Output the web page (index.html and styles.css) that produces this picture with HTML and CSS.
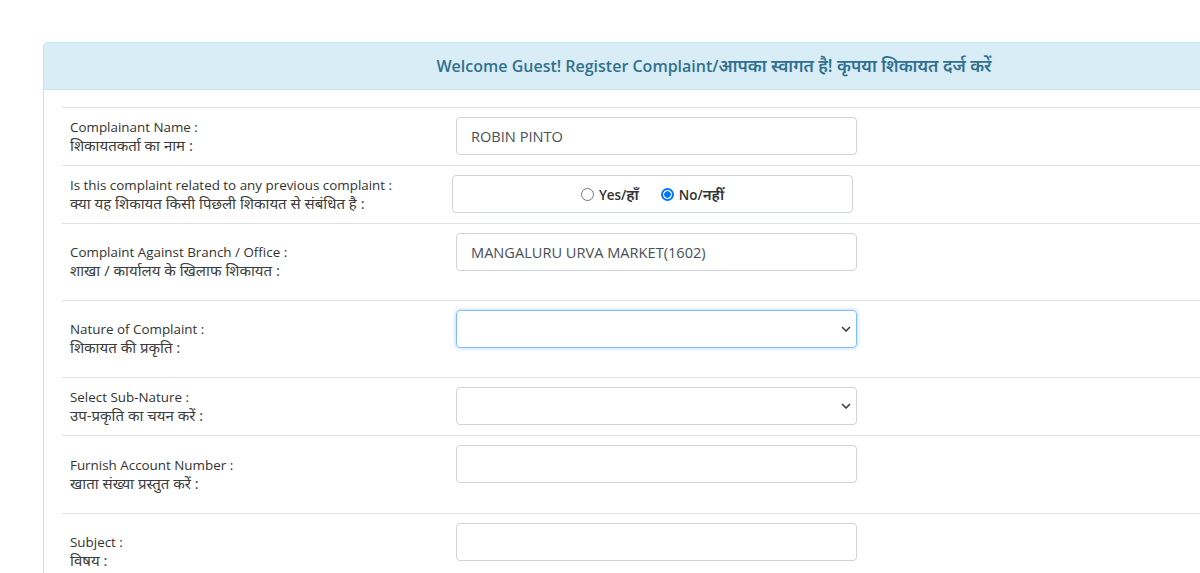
FILE: index.html
```html
<!DOCTYPE html>
<html lang="en">
<head>
<meta charset="utf-8">
<title>Register Complaint</title>
<link rel="stylesheet" href="styles.css">
</head>
<body>
<div class="panel">
  <div class="panel-heading">Welcome Guest! Register Complaint/<span class="hi">आपका स्वागत है! कृपया शिकायत दर्ज करें</span></div>
  <div class="panel-body">
    <table class="form-table">
      <tr>
        <td class="lbl">Complainant Name :<br><span class="hi">शिकायतकर्ता का नाम :</span></td>
        <td class="fld"><div class="input">ROBIN PINTO</div></td>
      </tr>
      <tr>
        <td class="lbl">Is this complaint related to any previous complaint :<br><span class="hi">क्या यह शिकायत किसी पिछली शिकायत से संबंधित है :</span></td>
        <td class="fld"><div class="radio-box">
          <span class="radio"></span><span class="opt">Yes/<span class="hi">हाँ</span></span>
          <span class="radio checked"></span><span class="opt">No/<span class="hi">नहीं</span></span>
        </div></td>
      </tr>
      <tr>
        <td class="lbl">Complaint Against Branch / Office :<br><span class="hi">शाखा / कार्यालय के खिलाफ शिकायत :</span></td>
        <td class="fld"><div class="input">MANGALURU URVA MARKET(1602)</div><div class="msg"></div></td>
      </tr>
      <tr>
        <td class="lbl">Nature of Complaint :<br><span class="hi">शिकायत की प्रकृति :</span></td>
        <td class="fld"><div class="input select focus"><svg class="chev" width="10" height="6" viewBox="0 0 10 6"><path d="M1 1l4 4 4-4" fill="none" stroke="#343a40" stroke-width="1.5"/></svg></div><div class="msg"></div></td>
      </tr>
      <tr>
        <td class="lbl">Select Sub-Nature :<br><span class="hi">उप-प्रकृति का चयन करें :</span></td>
        <td class="fld"><div class="input select"><svg class="chev" width="10" height="6" viewBox="0 0 10 6"><path d="M1 1l4 4 4-4" fill="none" stroke="#343a40" stroke-width="1.5"/></svg></div></td>
      </tr>
      <tr>
        <td class="lbl">Furnish Account Number :<br><span class="hi">खाता संख्या प्रस्तुत करें :</span></td>
        <td class="fld"><div class="input"></div><div class="msg tall"></div></td>
      </tr>
      <tr>
        <td class="lbl">Subject :<br><span class="hi">विषय :</span></td>
        <td class="fld"><div class="input"></div><div class="msg"></div></td>
      </tr>
    </table>
  </div>
</div>
</body>
</html>
```
FILE: styles.css
```css
html { overflow: hidden; }
body {
  margin: 0;
  background: #fff;
  font-family: "Open Sans", "Noto Sans", sans-serif;
  font-size: 13.4px;
  color: #333;
}
.hi { font-size: 1.12em; font-weight: normal; color: #3c3c3c; }
.panel {
  margin: 42px 0 0 43px;
  width: 1340px;
  border: 1px solid #bce8f1;
  border-radius: 4px;
  background: #fff;
}
.panel-heading {
  background: #d9edf7;
  border-bottom: 1px solid #bce8f1;
  color: #31708f;
  font-weight: 600;
  font-size: 16px;
  line-height: 20px;
  padding: 13px 15px 13px;
  text-align: center;
}
.panel-heading .hi { font-weight: 600; font-size: 1.08em; color: #31708f; }
.panel-body {
  padding: 17px 18px 16px;
}
.form-table {
  width: 100%;
  border-collapse: collapse;
}
.form-table td {
  border-top: 1px solid #dee2e6;
  padding: 9px 8px 10px;
  vertical-align: middle;
}
.form-table td.fld { vertical-align: top; }
.lbl {
  width: 370px;
  line-height: 18px;
  color: #333;
}
.input {
  position: relative;
  box-sizing: border-box;
  width: 401px;
  height: 38px;
  border: 1px solid #ced4da;
  border-radius: 4px;
  padding: 0 14px;
  font-size: 14.6px;
  line-height: 36px;
  color: #495057;
}
.input.focus {
  border-color: #80bdff;
  box-shadow: 0 0 4px rgba(0, 123, 255, 0.35);
}
.chev {
  position: absolute;
  right: 5px;
  top: 15px;
}
.msg { height: 19px; }
.msg.tall { height: 20px; }
.radio-box {
  box-sizing: border-box;
  width: 401px;
  height: 38px;
  margin-left: -4px;
  border: 1px solid #ced4da;
  border-radius: 4px;
  display: flex;
  align-items: center;
  justify-content: center;
  font-weight: 600;
  color: #333;
}
.radio-box .hi { font-weight: 600; color: #333; }
.radio {
  box-sizing: border-box;
  width: 13px;
  height: 13px;
  border: 1px solid #767676;
  border-radius: 50%;
  margin-right: 5px;
}
.radio.checked {
  border: 2px solid #0075ff;
  background: radial-gradient(circle, #0075ff 0 3px, #fff 3.5px);
}
.opt { margin-right: 22px; }
.opt:last-child { margin-right: 0; }
```
